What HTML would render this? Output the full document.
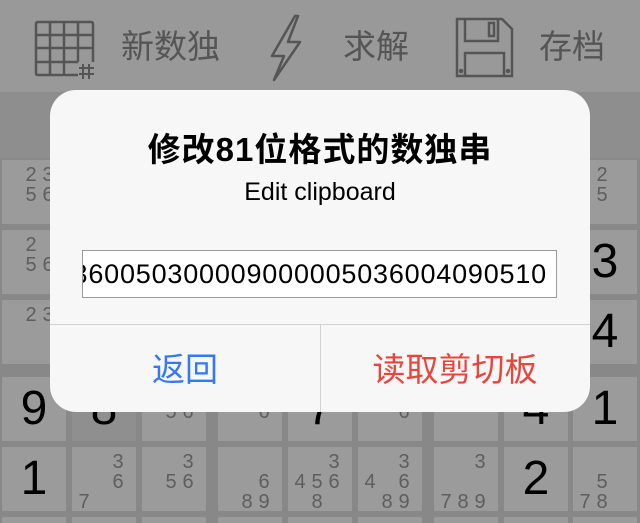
<!DOCTYPE html>
<html><head><meta charset="utf-8"><style>
*{margin:0;padding:0;box-sizing:border-box}
html,body{width:640px;height:523px;overflow:hidden}
body{background:#888;position:relative;font-family:"Liberation Sans","Noto Sans CJK SC",sans-serif}
#w{position:absolute;left:0;top:0;width:640px;height:523px;overflow:hidden}
.tb{position:absolute;left:0;top:0;width:640px;height:92px;background:#999}
.band{position:absolute;left:0;top:92px;width:640px;height:66px;background:#8e8e8e}
.c{position:absolute;width:64px;height:64px;background:#9b9b9b;overflow:hidden}
.c.h{background:#8f8f8f}
.big{position:absolute;left:0;top:0;width:64px;height:64px;font-size:48px;line-height:64px;text-align:center;color:#000}
.s{position:absolute;width:20px;height:20px;font-size:20px;line-height:20px;text-align:center;color:#5e5e5e}
.tt{position:absolute;top:27px;font-size:33px;color:#555;line-height:40px}
.dlg{position:absolute;left:50px;top:90px;width:540px;height:322px;background:#f7f7f7;border-radius:26px;overflow:hidden}
</style></head><body><div id="w">
<div class="tb">
<svg style="position:absolute;left:34px;top:20px" width="64" height="60" viewBox="0 0 64 60" fill="none" stroke="#555" stroke-width="2.5">
<path d="M44 55H4Q2 55 2 53V4Q2 2 4 2H57Q59 2 59 4V42"/>
<path d="M2 15H59M2 28H59M2 42H44M16 2V55M30 2V55M44 2V42"/>
<path d="M49 44V59M55 44V59M45 48H60M45 54H60" stroke-width="2"/>
</svg>
<div class="tt" style="left:121px">新数独</div>
<svg style="position:absolute;left:268px;top:14px" width="36" height="68" viewBox="0 0 36 68" fill="none" stroke="#555" stroke-width="2.5" stroke-linejoin="round">
<path d="M27 2L4 42H16L6 66L32 28H20L30 2Z"/>
</svg>
<div class="tt" style="left:343px">求解</div>
<svg style="position:absolute;left:454px;top:17px" width="62" height="62" viewBox="0 0 62 62" fill="none" stroke="#555" stroke-width="2.5">
<path d="M3 2H48L58 12V59H3Z"/>
<path d="M11 2V24H44V2"/><rect x="35" y="6" width="5" height="13"/>
<path d="M11 59V36H50V59"/>
<circle cx="7" cy="54" r="1" fill="#555"/><circle cx="54" cy="54" r="1" fill="#555"/>
</svg>
<div class="tt" style="left:539px">存档</div>
</div>
<div class="band"></div>
<div id="g"></div>
<div class="dlg">
<div style="position:absolute;top:40px;width:540px;text-align:center;font-size:33px;line-height:40px;font-weight:bold;letter-spacing:1px;color:#000">修改81位格式的数独串</div>
<div style="position:absolute;top:87px;width:540px;text-align:center;font-size:25px;line-height:30px;color:#000">Edit clipboard</div>
<div style="position:absolute;left:32px;top:160px;width:475px;height:48px;border:1px solid #9a9a9a;background:#fff;overflow:hidden;display:flex;justify-content:flex-end;align-items:center;padding-right:9px">
<span style="white-space:nowrap;font-size:27px;letter-spacing:0.8px;color:#000">360050300009000005036004090510</span></div>
<div style="position:absolute;left:0;top:234px;width:540px;height:1px;background:#d2d2d2"></div>
<div style="position:absolute;left:270px;top:234px;width:1px;height:88px;background:#d2d2d2"></div>
<div style="position:absolute;left:0;top:259px;width:270px;text-align:center;font-size:33px;line-height:42px;color:#3478f6">返回</div>
<div style="position:absolute;left:270px;top:259px;width:270px;text-align:center;font-size:33px;line-height:42px;color:#e8453c">读取剪切板</div>
</div>
</div>
<script>
var X=[2,72,142,218,288,358,434,504,573],Y=[160,230,300,377,447,517];
var d={
"0,0":"s2356","0,8":"s25","1,0":"s256","1,8":"b3","2,0":"s23","2,8":"b4",
"3,0":"b9","3,1":"b8","3,2":"s56","3,3":"s6","3,4":"b7","3,5":"s6","3,7":"b4","3,8":"b1",
"4,0":"b1","4,1":"s367","4,2":"s356","4,3":"s689","4,4":"s34568",
"4,5":"s34689","4,6":"s3789","4,7":"b2","4,8":"s578",
"5,0":"s23","5,1":"s23","5,2":"s23","5,3":"s12","5,4":"s123","5,5":"s23","5,6":"s3"};
var CX=[2,19,36],CY=[5,25,45];
var h="";
for(var r=0;r<6;r++)for(var c=0;c<9;c++){
var k=r+","+c,v=d[k]||"",inner="";
if(v[0]=="b")inner='<div class="big">'+v.slice(1)+'</div>';
else if(v[0]=="s"){v.slice(1).split("").forEach(function(ch){var n=+ch-1;
inner+='<div class="s" style="left:'+CX[n%3]+'px;top:'+CY[Math.floor(n/3)]+'px">'+ch+'</div>';});}
h+='<div class="c'+(k=="3,1"?" h":"")+'" style="left:'+X[c]+'px;top:'+Y[r]+'px;'+(r==5?'height:6px':'')+'">'+inner+'</div>';}
document.getElementById("g").innerHTML=h;
</script>
</body></html>
